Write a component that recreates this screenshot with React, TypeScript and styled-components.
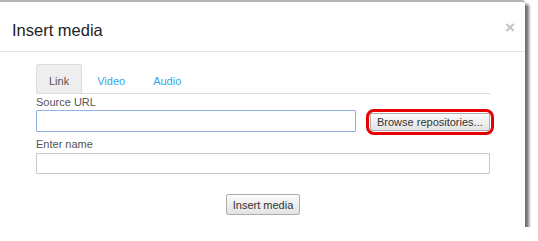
import styled, { createGlobalStyle } from "styled-components";

const GlobalStyle = createGlobalStyle`
  html, body {
    margin: 0;
    padding: 0;
    background: #fff;
    font-family: "Liberation Sans", Arial, sans-serif;
  }
`;

const Dialog = styled.div`
  width: 525px;
  height: 225px;
  background: #fff;
  border-top: 2px solid #b4b4b4;
  border-top-right-radius: 3px;
  box-shadow: 4px 4px 3px rgba(0, 0, 0, 0.55);
  display: flex;
  flex-direction: column;
`;

const Header = styled.div`
  height: 49px;
  flex-shrink: 0;
  display: flex;
  align-items: center;
  justify-content: space-between;
  padding: 0 12px;
  border-bottom: 1px solid #e5e5e5;
`;

const Title = styled.h3`
  margin: 0;
  font-size: 16.5px;
  font-weight: normal;
  color: #222;
  line-height: 20px;
  padding-top: 6px;
`;

const Close = styled.span`
  font-size: 17px;
  font-weight: bold;
  line-height: 1;
  color: #c2c2c2;
  padding-top: 2px;
  margin-right: -2px;
`;

const Body = styled.div`
  width: 454px;
  padding: 12px 0 0 36px;
  display: flex;
  flex-direction: column;
`;

const Tabs = styled.div`
  display: flex;
  height: 29px;
  border-bottom: 1px solid #ddd;
`;

const Tab = styled.div<{ $active?: boolean }>`
  display: flex;
  align-items: center;
  padding: 0 12px;
  margin-right: 2px;
  font-size: 11px;
  color: ${({ $active }) => ($active ? "#555" : "#33a6e6")};
  background: ${({ $active }) => ($active ? "#eee" : "transparent")};
  border: 1px solid ${({ $active }) => ($active ? "#ddd" : "transparent")};
  border-bottom: none;
  border-radius: 3px 3px 0 0;
  padding-top: 3px;
`;

const Label = styled.label`
  display: block;
  font-size: 11px;
  line-height: 14px;
  color: #555;
  margin-top: 1px;
`;

const Row = styled.div`
  display: flex;
  align-items: flex-start;
  gap: 10px;
  margin-top: 1px;
`;

const Input = styled.input<{ $w: number; $focus?: boolean }>`
  box-sizing: border-box;
  flex-shrink: 0;
  width: ${({ $w }) => $w}px;
  height: ${({ $focus }) => ($focus ? 22 : 21)}px;
  margin: 0;
  border: 1px solid ${({ $focus }) => ($focus ? "#8fb2ea" : "#c8c8c8")};
  border-radius: 1px;
  outline: none;
  background: #fff;
`;

const Highlight = styled.div`
  flex-shrink: 0;
  margin: -1px 0 -4px;
  padding: 1px;
  border: 3px solid #e60000;
  border-radius: 8px;
  display: flex;
`;

const Button = styled.button`
  font-family: "Liberation Sans", Arial, sans-serif;
  font-size: 11px;
  color: #333;
  white-space: nowrap;
  height: 18px;
  padding: 0 6px;
  margin: 0;
  background: linear-gradient(#fbfbfb, #e3e3e3);
  border: 1px solid #adadad;
  border-radius: 2px;
  line-height: 16px;
`;

const NameField = styled.div`
  margin-top: 4px;
  display: flex;
  flex-direction: column;
  gap: 2px;
`;

const Footer = styled.div`
  display: flex;
  justify-content: center;
  margin-top: 20px;
`;

const SubmitButton = styled(Button)`
  height: 21px;
`;

export default function App() {
  return (
    <>
      <GlobalStyle />
      <Dialog>
        <Header>
          <Title>Insert media</Title>
          <Close>×</Close>
        </Header>
        <Body>
          <Tabs>
            <Tab $active>Link</Tab>
            <Tab>Video</Tab>
            <Tab>Audio</Tab>
          </Tabs>
          <Label htmlFor="src">Source URL</Label>
          <Row>
            <Input id="src" $w={320} $focus />
            <Highlight>
              <Button type="button">Browse repositories...</Button>
            </Highlight>
          </Row>
          <NameField>
            <Label htmlFor="name">Enter name</Label>
            <Input id="name" $w={454} />
          </NameField>
          <Footer>
            <SubmitButton type="button">Insert media</SubmitButton>
          </Footer>
        </Body>
      </Dialog>
    </>
  );
}
